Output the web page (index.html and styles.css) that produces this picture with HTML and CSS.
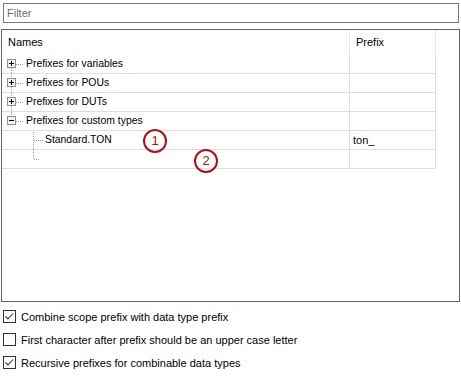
FILE: index.html
```html
<!DOCTYPE html>
<html>
<head>
<meta charset="utf-8">
<link rel="stylesheet" href="styles.css">
</head>
<body>
<div class="page">
  <div class="filter">Filter</div>
  <div class="tree">
    <div class="hdr">
      <div class="c-name"><span class="htxt">Names</span></div>
      <div class="c-prefix"><span class="htxt">Prefix</span></div>
    </div>
    <div class="row">
      <div class="c-name">
        <svg class="lines top" width="22" height="18" viewBox="0 0 22 18">
          <path d="M9.5 13v5" class="dot"/>
          <path d="M14 9.5h8" class="dot"/>
          <rect x="5.5" y="4.5" width="8" height="8" class="exp"/>
          <path d="M7 8.5h5M9.5 6v5" class="sign"/>
        </svg>
        <span class="txt">Prefixes for variables</span>
      </div>
      <div class="c-prefix"></div>
    </div>
    <div class="row">
      <div class="c-name">
        <svg class="lines top" width="22" height="18" viewBox="0 0 22 18">
          <path d="M9.5 0v4M9.5 13v5" class="dot"/>
          <path d="M14 9.5h8" class="dot"/>
          <rect x="5.5" y="4.5" width="8" height="8" class="exp"/>
          <path d="M7 8.5h5M9.5 6v5" class="sign"/>
        </svg>
        <span class="txt">Prefixes for POUs</span>
      </div>
      <div class="c-prefix"></div>
    </div>
    <div class="row">
      <div class="c-name">
        <svg class="lines top" width="22" height="18" viewBox="0 0 22 18">
          <path d="M9.5 0v4M9.5 13v5" class="dot"/>
          <path d="M14 9.5h8" class="dot"/>
          <rect x="5.5" y="4.5" width="8" height="8" class="exp"/>
          <path d="M7 8.5h5M9.5 6v5" class="sign"/>
        </svg>
        <span class="txt">Prefixes for DUTs</span>
      </div>
      <div class="c-prefix"></div>
    </div>
    <div class="row">
      <div class="c-name">
        <svg class="lines top" width="22" height="18" viewBox="0 0 22 18">
          <path d="M9.5 0v4" class="dot"/>
          <path d="M14 9.5h8" class="dot"/>
          <rect x="5.5" y="4.5" width="8" height="8" class="exp"/>
          <path d="M7 8.5h5" class="sign"/>
        </svg>
        <span class="txt">Prefixes for custom types</span>
      </div>
      <div class="c-prefix"></div>
    </div>
    <div class="row">
      <div class="c-name">
        <svg class="lines child" width="41" height="18" viewBox="0 0 41 18">
          <path d="M31.5 1v18" class="dot"/>
          <path d="M32 9.5h9" class="dot"/>
        </svg>
        <span class="txt">Standard.TON</span>
      </div>
      <div class="c-prefix"><span class="ptxt">ton_</span></div>
    </div>
    <div class="row">
      <div class="c-name">
        <svg class="lines child" width="41" height="18" viewBox="0 0 41 18">
          <path d="M31.5 0v9" class="dot"/>
          <path d="M32 9.5h6" class="dot"/>
        </svg>
      </div>
      <div class="c-prefix"></div>
    </div>
    <span class="mark m1">1</span>
    <span class="mark m2">2</span>
  </div>
  <div class="opts">
    <div class="opt">
      <span class="box"><svg width="11" height="11" viewBox="0 0 11 11"><path d="M1.5 5.5l2.5 2.5 5-5.5" class="chk"/></svg></span>
      <span class="lbl">Combine scope prefix with data type prefix</span>
    </div>
    <div class="opt">
      <span class="box"></span>
      <span class="lbl">First character after prefix should be an upper case letter</span>
    </div>
    <div class="opt">
      <span class="box"><svg width="11" height="11" viewBox="0 0 11 11"><path d="M1.5 5.5l2.5 2.5 5-5.5" class="chk"/></svg></span>
      <span class="lbl">Recursive prefixes for combinable data types</span>
    </div>
  </div>
</div>
</body>
</html>
```

FILE: styles.css
```css
* { box-sizing: border-box; }
html, body { margin: 0; padding: 0; background: #fff; }
body {
  width: 461px;
  height: 377px;
  overflow: hidden;
  font-family: "Liberation Sans", Arial, sans-serif;
  color: #000;
}
.page { padding-top: 3px; }

.filter {
  margin-left: 3px;
  width: 456px;
  height: 20px;
  border: 1px solid #7a7a7a;
  font-size: 11px;
  line-height: 18px;
  padding-left: 3px;
  color: #6d6d6d;
}

.tree {
  position: relative;
  margin: 6px 0 0 1px;
  width: 459px;
  height: 273px;
  border: 1px solid #646464;
  font-size: 10.4px;
}

.hdr {
  display: flex;
  height: 25px;
}
.hdr .c-name { width: 348px; border-right: 1px solid #e8e8e8; }
.hdr .c-prefix { width: 86px; border-right: 1px solid #e8e8e8; }
.htxt {
  display: block;
  font-size: 11px;
  line-height: 25px;
  padding-left: 6px;
}

.row {
  display: flex;
  height: 19px;
  border-bottom: 1px solid #dedede;
  width: 434px;
}
.row .c-name {
  width: 348px;
  border-right: 1px solid #dedede;
  display: flex;
  align-items: center;
}
.row .c-prefix {
  width: 86px;
  border-right: 1px solid #dedede;
  display: flex;
  align-items: center;
}
.lines { display: block; flex: none; }
.txt { margin-left: 2px; line-height: 18px; white-space: nowrap; }
.ptxt { margin-left: 3px; line-height: 18px; font-size: 11px; }

.dot { stroke: #a0a0a0; stroke-width: 1; stroke-dasharray: 1 1; fill: none; }
.exp { fill: #f0f0f0; stroke: #8f8f8f; stroke-width: 1; }
.sign { stroke: #000; stroke-width: 1; fill: none; }

.mark {
  position: absolute;
  width: 24px;
  height: 24px;
  border: 2px solid #b0101a;
  border-radius: 50%;
  color: #b0101a;
  font-size: 13px;
  line-height: 20px;
  text-align: center;
}
.m1 { left: 141px; top: 99px; }
.m2 { left: 192px; top: 119px; }

.opts { margin-top: 3px; }
.opt {
  display: flex;
  align-items: center;
  height: 23px;
}
.box {
  margin-left: 3px;
  width: 13px;
  height: 13px;
  border: 1px solid #333;
  background: #fff;
  display: flex;
  align-items: center;
  justify-content: center;
}
.box svg { display: block; }
.chk { stroke: #333; stroke-width: 1.1; fill: none; }
.lbl {
  margin-left: 5px;
  font-size: 11px;
  white-space: nowrap;
}
```
